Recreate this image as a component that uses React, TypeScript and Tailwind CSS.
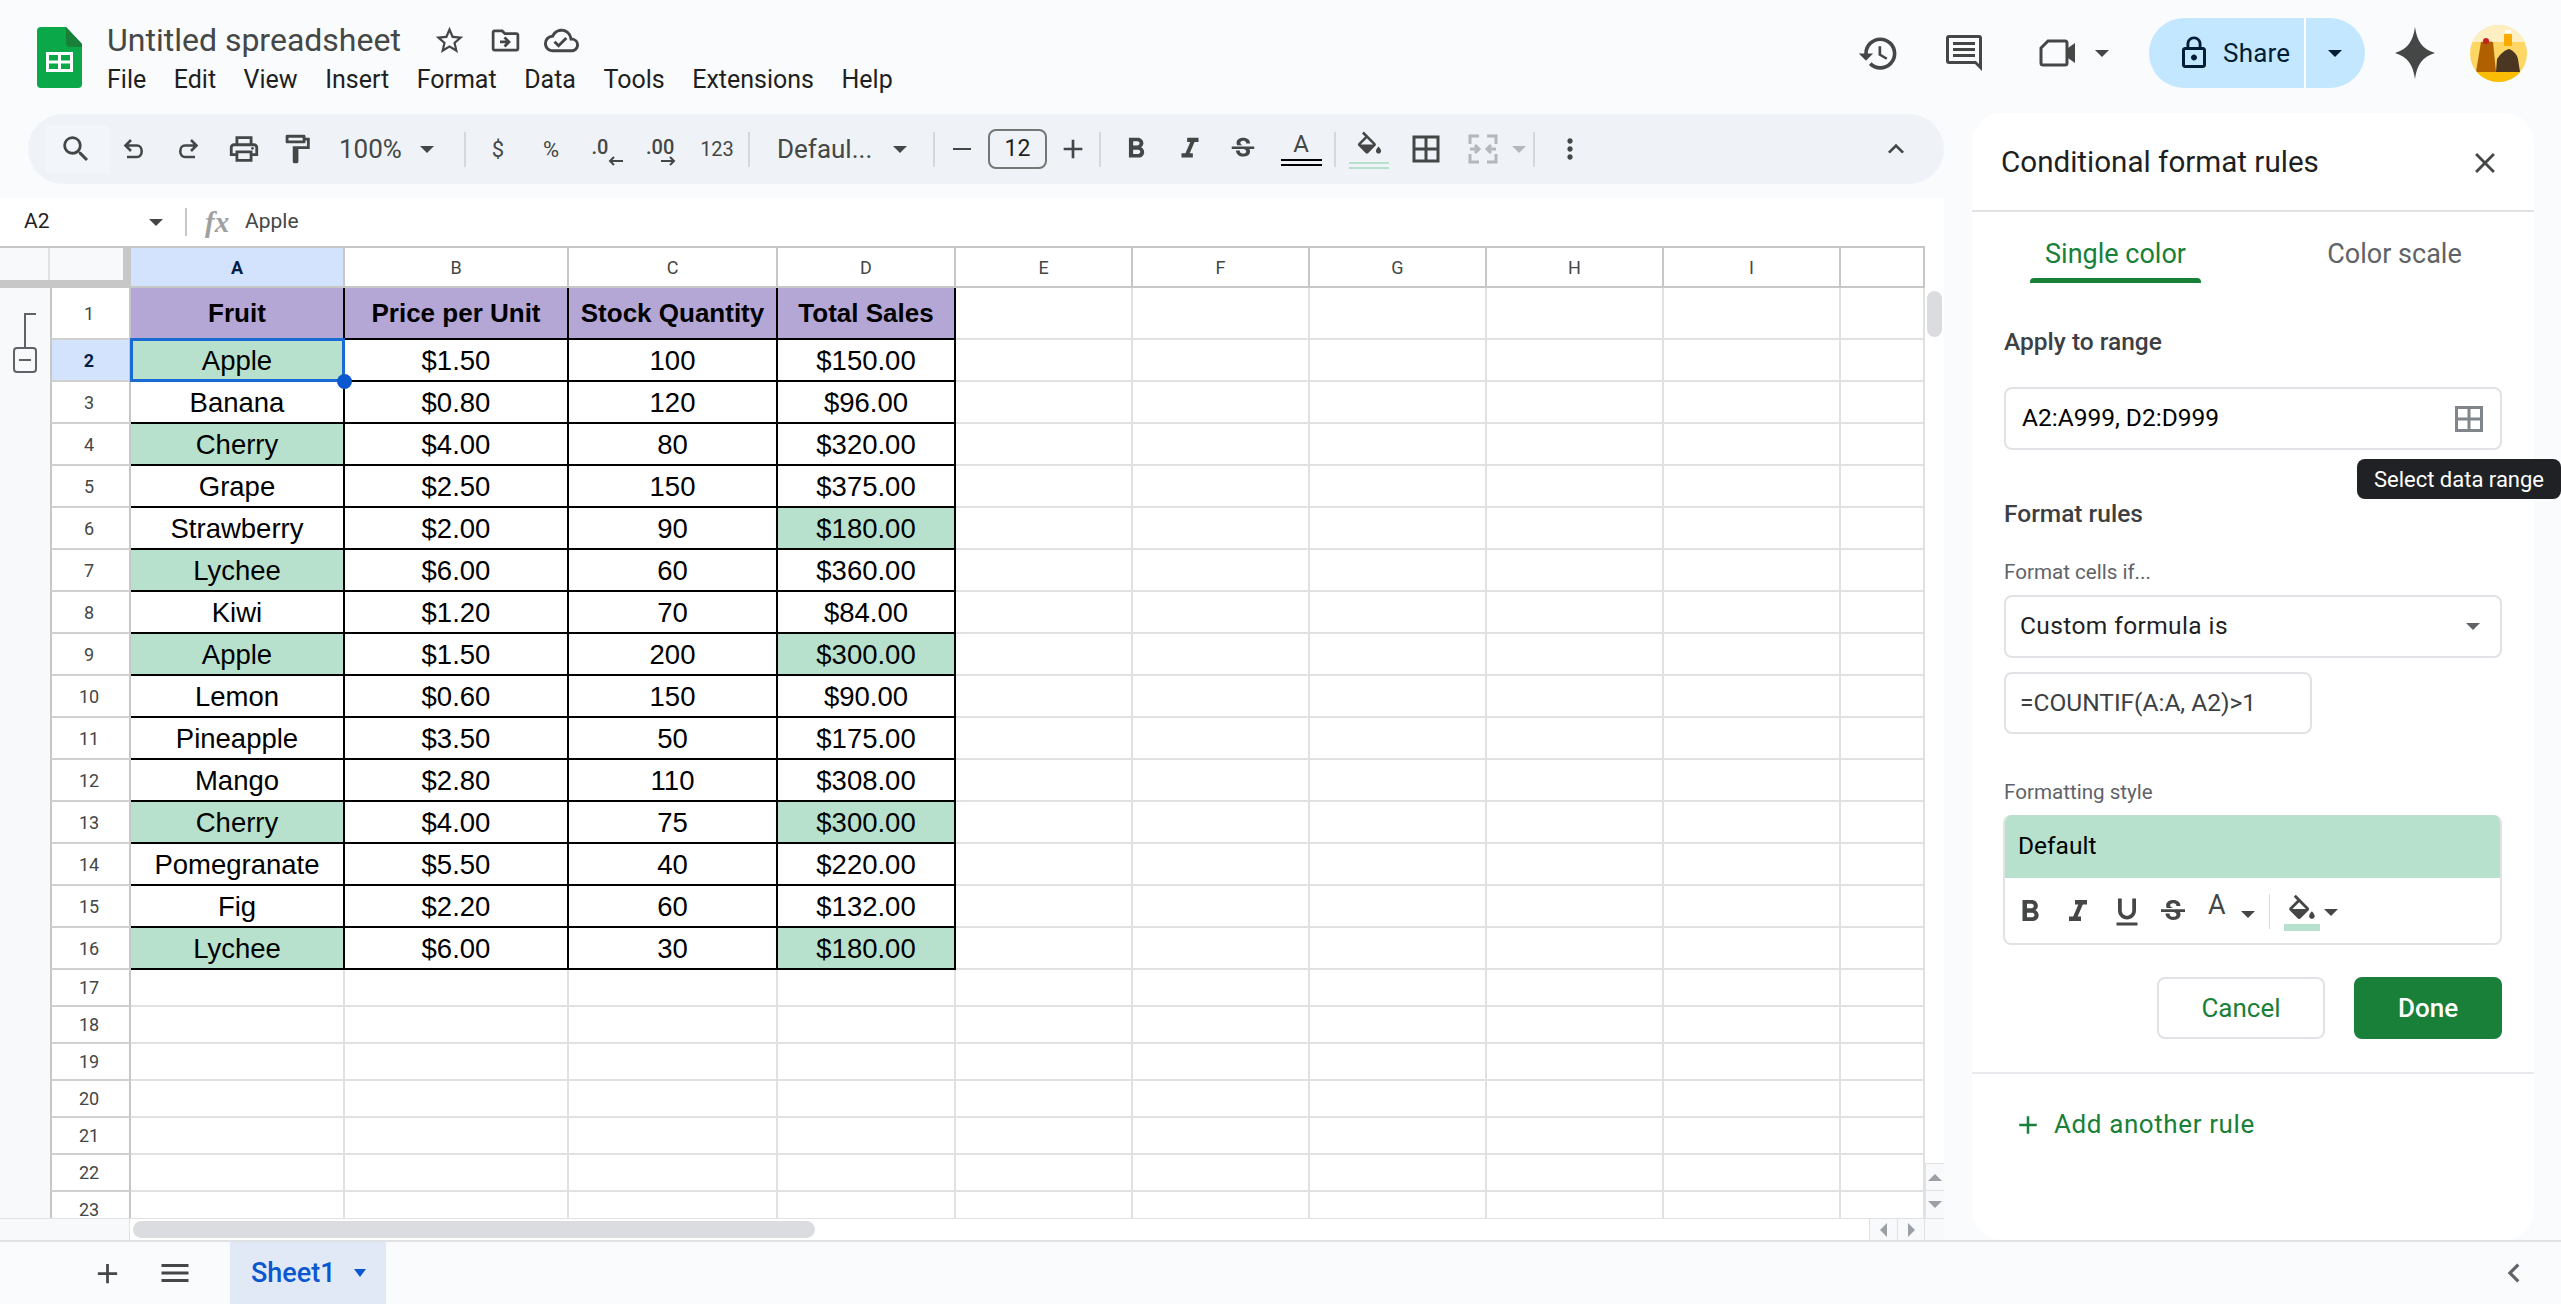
import type { ReactNode } from "react";
import {
  MdAdd,
  MdChevronLeft,
  MdClose,
  MdExpandLess,
  MdFormatBold,
  MdFormatItalic,
  MdFormatUnderlined,
  MdHistory,
  MdLockOutline,
  MdMenu,
  MdMoreVert,
  MdOutlineBorderAll,
  MdOutlineCloudDone,
  MdOutlineDriveFileMove,
  MdOutlineFormatPaint,
  MdOutlineLocalPrintshop,
  MdOutlineStarBorder,
  MdSearch,
  MdStrikethroughS,
} from "react-icons/md";

const menus = ["File", "Edit", "View", "Insert", "Format", "Data", "Tools", "Extensions", "Help"];

const rows: [string, string, string, string, boolean, boolean][] = [
  ["Apple", "$1.50", "100", "$150.00", true, false],
  ["Banana", "$0.80", "120", "$96.00", false, false],
  ["Cherry", "$4.00", "80", "$320.00", true, false],
  ["Grape", "$2.50", "150", "$375.00", false, false],
  ["Strawberry", "$2.00", "90", "$180.00", false, true],
  ["Lychee", "$6.00", "60", "$360.00", true, false],
  ["Kiwi", "$1.20", "70", "$84.00", false, false],
  ["Apple", "$1.50", "200", "$300.00", true, true],
  ["Lemon", "$0.60", "150", "$90.00", false, false],
  ["Pineapple", "$3.50", "50", "$175.00", false, false],
  ["Mango", "$2.80", "110", "$308.00", false, false],
  ["Cherry", "$4.00", "75", "$300.00", true, true],
  ["Pomegranate", "$5.50", "40", "$220.00", false, false],
  ["Fig", "$2.20", "60", "$132.00", false, false],
  ["Lychee", "$6.00", "30", "$180.00", true, true],
];

const colA = "w-[214px]";
const colB = "w-[224px]";
const colC = "w-[209px]";
const colD = "w-[178px]";
const colE = "w-[177px]";
const colLast = "w-[84px]";
const plainCols = [colE, colE, colE, colE, colE, colLast];
const allCols = [colA, colB, colC, colD, ...plainCols];
const letters = ["A", "B", "C", "D", "E", "F", "G", "H", "I", ""];

function Caret({ className = "" }: { className?: string }) {
  return <span className={`inline-block h-0 w-0 border-x-[7px] border-t-[7px] border-x-transparent ${className}`} />;
}

function Slot({ className = "", children }: { className?: string; children?: ReactNode }) {
  return <div className={`flex h-full shrink-0 items-center justify-center ${className}`}>{children}</div>;
}

function Divider() {
  return <div className="h-[35px] w-[2px] shrink-0 bg-[#d4d7db]" />;
}

function FillIcon({ size }: { size: number }) {
  return (
    <svg width={size} height={size} viewBox="0 0 24 20" fill="#444746">
      <path d="M16.56 8.94 7.62 0 6.21 1.41l2.38 2.38-5.15 5.15c-.59.59-.59 1.54 0 2.12l5.5 5.5c.29.29.68.44 1.06.44s.77-.15 1.06-.44l5.5-5.5c.59-.58.59-1.53 0-2.11zM5.21 10 10 5.21 14.79 10H5.21zM19 11.5s-2 2.17-2 3.5c0 1.1.9 2 2 2s2-.9 2-2c0-1.33-2-3.5-2-3.5z" />
    </svg>
  );
}

function HookArrow({ flip }: { flip?: boolean }) {
  return (
    <svg width="24" height="24" viewBox="0 0 24 24" fill="none" stroke="#444746" strokeWidth="2.600" className={flip ? "-scale-x-100" : ""}>
      <path d="M9 3 3.500 8.500 9 14M3.500 8.500H15a4.500 5.500 0 0 1 0 11.500H5" />
    </svg>
  );
}

function DecimalArrow({ left }: { left: boolean }) {
  return (
    <svg width="15" height="10" viewBox="0 0 15 10" fill="none" stroke="#444746" strokeWidth="2" className="self-end">
      {left ? <path d="M15 5H2M6 1 2 5l4 4" /> : <path d="M0 5h13M9 1l4 4-4 4" />}
    </svg>
  );
}

function Logo() {
  return (
    <svg width="45" height="61" viewBox="0 0 45 61" className="shrink-0">
      <path d="M4 0h25l16 17v40a4 4 0 0 1-4 4H4a4 4 0 0 1-4-4V4a4 4 0 0 1 4-4z" fill="#0ba84a" />
      <path d="M29 0l16 17v3H33a4 4 0 0 1-4-4z" fill="#188038" />
      <path d="M9 25h27v20H9z" fill="#fff" />
      <path d="M12 28h9v5.500h-9zM24 28h9v5.500h-9zM12 36.500h9V42h-9zM24 36.500h9V42h-9z" fill="#0ba84a" />
    </svg>
  );
}

function Avatar() {
  return (
    <svg width="57" height="57" viewBox="0 0 57 57" className="shrink-0">
      <defs>
        <clipPath id="avatar-clip">
          <circle cx="28.500" cy="28.500" r="28.500" />
        </clipPath>
      </defs>
      <g clipPath="url(#avatar-clip)">
        <rect width="57" height="57" fill="#fdd663" />
        <rect width="57" height="17" fill="#feefc3" />
        <rect y="47" width="57" height="10" fill="#fbbc04" />
        <path d="M11 17l6-1 6 1 3 30H6z" fill="#b06000" />
        <path d="M26 47l1-13c4-6 8-9 12-10 5 2 8 6 9 10l2 13z" fill="#4b3621" />
        <rect x="34" y="9" width="8" height="12" rx="1" fill="#f9ab00" />
        <rect x="35" y="5" width="6" height="3" fill="#fff" />
        <circle cx="16" cy="16" r="3" fill="#c5221f" />
      </g>
    </svg>
  );
}

function Header() {
  return (
    <header className="flex h-[113px] shrink-0 items-start">
      <div className="ml-[37px] mt-[27px]">
        <Logo />
      </div>
      <div className="ml-[25px] mt-[20px] flex flex-col">
        <div className="flex h-[40px] items-center text-[#444746]">
          <span className="w-[327px] text-[32px] leading-none text-[#444746]">Untitled spreadsheet</span>
          <MdOutlineStarBorder size={33} className="-ml-[1px]" />
          <MdOutlineDriveFileMove size={33} className="ml-[23px]" />
          <MdOutlineCloudDone size={35} className="ml-[22px]" />
        </div>
        <nav className="mt-[4px] flex h-[30px] items-center gap-[27.5px] text-[25px] leading-none text-[#1f1f1f]">
          {menus.map((m) => (
            <span key={m}>{m}</span>
          ))}
        </nav>
      </div>
      <div className="ml-auto mt-[18px] flex h-[70px] items-center pr-[34px] text-[#444746]">
        <MdHistory size={43} />
        <svg width="36" height="36" viewBox="0 0 36 36" fill="#444746" className="ml-[46px]">
          <path d="M3 0h30a3 3 0 0 1 3 3v33l-7-7H3a3 3 0 0 1-3-3V3a3 3 0 0 1 3-3zm0 3v23h27l3 3V3zm4 4h22v3H7zm0 6h22v3H7zm0 6h22v3H7z" fillRule="evenodd" />
        </svg>
        <svg width="37" height="28" viewBox="0 0 37 28" fill="none" stroke="#444746" strokeWidth="3" className="ml-[57px]">
          <path d="M9 2h17a2 2 0 0 1 2 2v20a2 2 0 0 1-2 2H4a2 2 0 0 1-2-2V9z" />
          <path d="M29 9l7-5v20l-7-5z" fill="#444746" stroke="none" />
        </svg>
        <Caret className="ml-[19px] border-t-[#444746]" />
        <div className="ml-[40px] flex h-[70px] w-[216px] items-center rounded-full bg-[#c2e7ff] text-[#001d35]">
          <div className="flex h-full w-[157px] items-center border-r-2 border-white pl-[27px]">
            <MdLockOutline size={36} />
            <span className="ml-[11px] text-[26px] tracking-[0.2px]">Share</span>
          </div>
          <Caret className="ml-[22px] border-t-[#001d35]" />
        </div>
        <svg width="40" height="52" viewBox="0 0 40 52" fill="#444746" className="ml-[30px]">
          <path d="M20 0c2 14 7 22 20 26-13 4-18 12-20 26-2-14-7-22-20-26 13-4 18-12 20-26z" />
        </svg>
        <div className="ml-[35px]">
          <Avatar />
        </div>
      </div>
    </header>
  );
}

function Toolbar() {
  return (
    <div className="ml-[28px] mt-px flex h-[70px] w-[1916px] items-center rounded-full bg-[#eff3f8] pl-[17px] text-[#444746]">
      <Slot className="my-[11px] !h-[48px] w-[65px] bg-[#f2f5fa] pr-[3px]">
        <MdSearch size={34} />
      </Slot>
      <Slot className="w-[48px]"><HookArrow /></Slot>
      <Slot className="w-[60px]"><HookArrow flip /></Slot>
      <Slot className="w-[52px]"><MdOutlineLocalPrintshop size={34} /></Slot>
      <Slot className="w-[54px]"><MdOutlineFormatPaint size={34} /></Slot>
      <Slot className="w-[140px] justify-start pl-[15px]">
        <span className="w-[81px] text-[26px]">100%</span>
        <Caret className="border-t-[#444746]" />
      </Slot>
      <Divider />
      <Slot className="w-[64px] text-[22px]">$</Slot>
      <Slot className="w-[42px] text-[22px]">%</Slot>
      <Slot className="w-[64px] pl-[6px]">
        <div className="flex w-[31px] flex-col pt-[5px]">
          <span className="text-[20px] font-medium leading-[18px]">.0</span>
          <DecimalArrow left />
        </div>
      </Slot>
      <Slot className="w-[50px]">
        <div className="flex w-[30px] flex-col pt-[5px]">
          <span className="text-[20px] font-medium leading-[18px]">.00</span>
          <DecimalArrow left={false} />
        </div>
      </Slot>
      <Slot className="w-[62px] text-[20px]">123</Slot>
      <Divider />
      <Slot className="w-[183px] justify-start pl-[27px]">
        <span className="w-[116px] text-[26px]">Defaul...</span>
        <Caret className="border-t-[#444746]" />
      </Slot>
      <Divider />
      <Slot className="w-[53px]"><div className="h-[2px] w-[18px] bg-[#444746]" /></Slot>
      <div className="flex h-[40px] w-[59px] shrink-0 items-center justify-center rounded-[8px] border-2 border-[#747775] text-[23px] text-[#1f1f1f]">12</div>
      <Slot className="w-[52px]"><MdAdd size={32} /></Slot>
      <Divider />
      <Slot className="w-[70px]"><MdFormatBold size={34} /></Slot>
      <Slot className="w-[38px]"><MdFormatItalic size={34} /></Slot>
      <Slot className="w-[68px]"><MdStrikethroughS size={30} /></Slot>
      <Slot className="w-[48px]">
        <div className="flex flex-col items-center">
          <span className="text-[24px] leading-[24px]">A</span>
          <div className="mt-[3px] h-[7px] w-[41px] border-y-2 border-black" />
        </div>
      </Slot>
      <div className="w-[9px] shrink-0" />
      <Divider />
      <Slot className="w-[66px]">
        <div className="flex flex-col items-center">
          <FillIcon size={31} />
          <div className="mt-[2px] h-[7px] w-[40px] border-y-2 border-[#b7e1cd]" />
        </div>
      </Slot>
      <Slot className="w-[48px]"><MdOutlineBorderAll size={36} /></Slot>
      <Slot className="w-[58px] pl-[8px]">
        <svg width="30" height="30" viewBox="0 0 30 30" fill="none" stroke="#b4b7bb" strokeWidth="3">
          <path d="M11 2H2v8M19 2h9v8M11 28H2v-8M19 28h9v-8M2 15h8M7 11l4 4-4 4M28 15h-8M23 11l-4 4 4 4" />
        </svg>
      </Slot>
      <Slot className="w-[22px]"><Caret className="border-t-[#b4b7bb]" /></Slot>
      <div className="w-[3px] shrink-0" />
      <Divider />
      <Slot className="w-[70px]"><MdMoreVert size={32} /></Slot>
      <Slot className="ml-auto mr-[28px] w-[40px]"><MdExpandLess size={32} /></Slot>
    </div>
  );
}

function FormulaBar() {
  return (
    <div className="mt-[14px] flex h-[48px] w-[1944px] items-center bg-white text-[21px]">
      <span className="ml-[24px] w-[125px] text-[#1f1f1f]">A2</span>
      <Caret className="border-t-[#444746]" />
      <div className="ml-[22px] h-[28px] w-[2px] bg-[#c7c7c7]" />
      <span className="ml-[18px] w-[40px] text-[29px] font-bold italic leading-none text-[#a0a0a0] [font-family:'Liberation_Serif',serif]">fx</span>
      <span className="text-[#444746]">Apple</span>
    </div>
  );
}

function ColumnHeaders() {
  return (
    <div className="flex h-[42px] shrink-0 border-t-2 border-[#c4c7c5]">
      <div className="flex w-[131px] shrink-0 border-b-[8px] border-r-[8px] border-[#c7c7c7] bg-[#f8f9fa]">
        <div className="w-[50px] border-r-2 border-[#e1e1e1]" />
      </div>
      {allCols.map((w, i) => (
        <div
          key={i}
          className={`flex ${w} shrink-0 items-center justify-center border-b-2 border-r-2 border-[#c7c7c7] text-[18px] ${
            i === 0 ? "bg-[#d3e3fd] font-bold text-[#041e49]" : "bg-white text-[#444746]"
          }`}
        >
          {letters[i]}
        </div>
      ))}
    </div>
  );
}

function RowLabel({ n, active, height }: { n: number; active?: boolean; height: string }) {
  return (
    <>
      <div className={`${height} w-[50px] shrink-0 bg-[#f8f9fa]`} />
      <div
        className={`flex ${height} w-[81px] shrink-0 items-center justify-center border-x-2 border-b-2 border-x-[#c7c7c7] border-b-[#d0d0d0] pr-[3px] text-[18px] ${
          active ? "bg-[#d3e3fd] font-bold text-[#041e49]" : "bg-white text-[#444746]"
        }`}
      >
        {n}
      </div>
    </>
  );
}

function Cell({ w, fill, active, children }: { w: string; fill?: boolean; active?: boolean; children: ReactNode }) {
  return (
    <div
      className={`relative flex h-full ${w} shrink-0 items-center justify-center border-b-[2px] border-r-[2px] border-black pt-[2px] text-[27.5px] leading-none text-black [font-family:'Liberation_Sans',Arial,sans-serif] ${
        fill ? "bg-[#b7e1cd]" : "bg-white"
      }`}
    >
      {children}
      {active && (
        <>
          <div className="absolute -bottom-[2px] -left-[1px] -right-[2px] -top-[2px] border-[3px] border-[#1a6ad4]" />
          <div className="absolute -bottom-[9px] -right-[9px] z-10 h-[15px] w-[15px] rounded-full bg-[#0b57d0]" />
        </>
      )}
    </div>
  );
}

function Sheet() {
  return (
    <div className="relative h-[972px] w-[1925px] shrink-0 overflow-hidden">
      <ColumnHeaders />
      <div className="flex h-[52px]">
        <RowLabel n={1} height="h-[52px]" />
        {["Fruit", "Price per Unit", "Stock Quantity", "Total Sales"].map((t, i) => (
          <div
            key={t}
            className={`flex h-full ${allCols[i]} shrink-0 items-center justify-center border-b-[2px] border-r-[2px] border-black bg-[#b4a7d6] text-[26px] font-bold leading-none text-black [font-family:'Liberation_Sans',Arial,sans-serif]`}
          >
            {t}
          </div>
        ))}
        <BlankCells />
      </div>
      {rows.map((r, i) => (
        <div key={i} className="flex h-[42px]">
          <RowLabel n={i + 2} active={i === 0} height="h-[42px]" />
          <Cell w={colA} fill={r[4]} active={i === 0}>{r[0]}</Cell>
          <Cell w={colB}>{r[1]}</Cell>
          <Cell w={colC}>{r[2]}</Cell>
          <Cell w={colD} fill={r[5]}>{r[3]}</Cell>
          <BlankCells />
        </div>
      ))}
      {[17, 18, 19, 20, 21, 22].map((n) => (
        <div key={n} className="flex h-[37px]">
          <RowLabel n={n} height="h-[37px]" />
          {allCols.map((w, i) => (
            <div key={i} className={`h-full ${w} shrink-0 border-b-2 border-r-2 border-[#e1e1e1] bg-white`} />
          ))}
        </div>
      ))}
      {/* row 23 only shows its upper part above the scrollbar */}
      <div className="flex h-[26px]">
        <div className="h-full w-[50px] shrink-0 bg-[#f8f9fa]" />
        <div className="flex h-full w-[81px] shrink-0 justify-center border-x-2 border-x-[#c7c7c7] bg-white pr-[3px] pt-[11px] text-[18px] leading-[14px] text-[#444746]">
          23
        </div>
        {allCols.map((w, i) => (
          <div key={i} className={`h-full ${w} shrink-0 border-r-2 border-[#e1e1e1] bg-white`} />
        ))}
      </div>
      <svg width="26" height="62" viewBox="0 0 26 62" fill="none" stroke="#5f6368" strokeWidth="2" className="absolute left-[12px] top-[66px]">
        <path d="M24 2h-11v34" />
        <rect x="2" y="36" width="22" height="24" rx="3" />
        <path d="M7 48h12" />
      </svg>
    </div>
  );
}

function BlankCells() {
  return (
    <>
      {plainCols.map((w, i) => (
        <div key={i} className={`h-full ${w} shrink-0 border-b-2 border-r-2 border-[#e1e1e1] bg-white`} />
      ))}
    </>
  );
}

function VerticalScroll() {
  return (
    <div className="flex w-[19px] shrink-0 flex-col bg-white">
      <div className="ml-[2px] mt-[45px] h-[46px] w-[15px] rounded-full bg-[#dadce0]" />
      <div className="mt-auto flex h-[28px] items-center justify-center border-y border-l border-[#e1e1e1] bg-[#f8f9fa]">
        <span className="h-0 w-0 border-x-[7px] border-b-[7px] border-x-transparent border-b-[#9aa0a6]" />
      </div>
      <div className="flex h-[27px] items-center justify-center border-l border-[#e1e1e1] bg-[#f8f9fa]">
        <span className="h-0 w-0 border-x-[7px] border-t-[7px] border-x-transparent border-t-[#9aa0a6]" />
      </div>
    </div>
  );
}

function HorizontalScroll() {
  return (
    <div className="flex h-[22px] shrink-0 border-t border-[#e1e1e1] bg-white">
      <div className="h-full w-[130px] shrink-0 border-r border-[#e1e1e1] bg-[#f8f9fa]" />
      <div className="ml-[3px] mt-[2px] h-[17px] w-[682px] rounded-full bg-[#dadce0]" />
      <div className="ml-auto flex h-full w-[28px] items-center justify-center border-l border-[#e1e1e1] bg-[#f8f9fa]">
        <span className="h-0 w-0 border-y-[7px] border-r-[7px] border-y-transparent border-r-[#9aa0a6]" />
      </div>
      <div className="flex h-full w-[27px] items-center justify-center border-l border-[#e1e1e1] bg-[#f8f9fa]">
        <span className="h-0 w-0 border-y-[7px] border-l-[7px] border-y-transparent border-l-[#9aa0a6]" />
      </div>
      <div className="h-full w-[20px] border-l border-[#e1e1e1] bg-[#f8f9fa]" />
    </div>
  );
}

function FieldBox({ className = "", children }: { className?: string; children: ReactNode }) {
  return (
    <div className={`flex h-[62px] items-center rounded-[8px] border-2 border-[#e0e2e6] bg-white text-[24.5px] ${className}`}>
      {children}
    </div>
  );
}

function Panel() {
  return (
    <aside className="relative ml-[28px] flex h-[1127px] w-[562px] shrink-0 flex-col rounded-[30px] bg-white">
      <div className="flex h-[99px] shrink-0 items-center justify-between border-b-2 border-[#e0e2e6] pl-[29px] pr-[32px] pt-[2px]">
        <span className="text-[29.6px] text-[#1f1f1f]">Conditional format rules</span>
        <MdClose size={34} className="text-[#444746]" />
      </div>
      <div className="flex h-[71px] shrink-0 pl-[58px] text-[27px]">
        <div className="flex w-[171px] flex-col items-center">
          <div className="flex flex-1 items-center pt-[19px] text-[#188038]">Single color</div>
          <div className="h-[5px] w-full rounded-t-[4px] bg-[#188038]" />
        </div>
        <div className="ml-[108px] flex w-[171px] flex-col items-center">
          <div className="flex flex-1 items-center pb-[5px] pt-[19px] text-[#5f6368]">Color scale</div>
        </div>
      </div>
      <div className="flex flex-col pl-[32px] pr-[32px]">
        <div className="mt-[45px] h-[28px] text-[24.5px] font-medium leading-[28px] text-[#3c4043]">Apply to range</div>
        <FieldBox className="mt-[31px] !h-[63px] justify-between pl-[16px] pr-[17px] text-black">
          <span>A2:A999, D2:D999</span>
          <svg width="28" height="26" viewBox="0 0 28 26" fill="none" stroke="#80868b" strokeWidth="3">
            <rect x="1.500" y="1.500" width="25" height="23" />
            <path d="M14 1.500v23M1.500 13h25" />
          </svg>
        </FieldBox>
        <div className="mt-[50px] h-[28px] text-[24.5px] font-medium leading-[28px] text-[#3c4043]">Format rules</div>
        <div className="mt-[32px] h-[24px] text-[20.6px] leading-[24px] text-[#5f6368]">Format cells if...</div>
        <FieldBox className="mt-[11px] !h-[63px] justify-between pl-[14px] pr-[20px] text-[#1f1f1f]">
          <span className="tracking-[0.4px]">Custom formula is</span>
          <Caret className="border-t-[#5f6368]" />
        </FieldBox>
        <FieldBox className="mt-[14px] w-[308px] pl-[14px] text-[#3c4043]">=COUNTIF(A:A, A2)&gt;1</FieldBox>
        <div className="mt-[46px] h-[24px] text-[20.6px] leading-[24px] text-[#5f6368]">Formatting style</div>
        <div className="-ml-[1px] mt-[11px] overflow-hidden rounded-[8px] border-2 border-t-0 border-[#e0e2e6]">
          <div className="-mx-[2px] flex h-[63px] items-center bg-[#b7e1cd] pl-[15px] text-[24.5px] text-black">Default</div>
          <div className="flex h-[65px] items-center pt-[2px] text-[#444746]">
            <MdFormatBold size={36} className="ml-[7px]" />
            <MdFormatItalic size={36} className="ml-[12px]" />
            <MdFormatUnderlined size={36} className="ml-[13px]" />
            <MdStrikethroughS size={32} className="ml-[12px]" />
            <div className="ml-[19px] flex w-[60px] items-start">
              <span className="-mt-[13px] text-[27px] leading-[30px]">A</span>
              <Caret className="ml-[15px] mt-[8px] border-t-[#444746]" />
            </div>
            <div className="ml-[1px] h-[35px] w-px bg-[#dadce0]" />
            <div className="ml-[14px] flex w-[36px] flex-col items-center">
              <FillIcon size={34} />
              <div className="-mt-[2px] h-[7px] w-[36px] bg-[#b7e1cd]" />
            </div>
            <Caret className="ml-[4px] mt-[2px] border-t-[#444746]" />
          </div>
        </div>
        <div className="mt-[32px] flex justify-end gap-[29px] text-[26px]">
          <div className="flex h-[62px] w-[168px] items-center justify-center rounded-[8px] border-2 border-[#e0e2e6] text-[#188038]">Cancel</div>
          <div className="flex h-[62px] w-[148px] items-center justify-center rounded-[8px] bg-[#188038] font-medium text-white">Done</div>
        </div>
      </div>
      <div className="mt-[33px] h-[2px] shrink-0 bg-[#e8eaed]" />
      <div className="mt-[31px] flex items-center pl-[41px] text-[26px] tracking-[0.6px] text-[#188038]">
        <MdAdd size={30} />
        <span className="ml-[11px]">Add another rule</span>
      </div>
      <div className="absolute left-[385px] top-[346px] flex h-[40px] w-[204px] items-center justify-center rounded-[8px] bg-[#202124] text-[22px] text-white">
        Select data range
      </div>
    </aside>
  );
}

function Footer() {
  return (
    <footer className="flex h-[64px] shrink-0 items-center border-t-2 border-[#e0e2e6] text-[#444746]">
      <MdAdd size={33} className="ml-[91px]" />
      <MdMenu size={36} className="ml-[33px]" />
      <div className="ml-[37px] flex h-full w-[156px] items-center bg-[#e1e9f7] pl-[21px] text-[27px] font-medium text-[#0b57d0]">
        Sheet1
        <Caret className="ml-[18px] !border-x-[6px] !border-t-[8px] border-t-[#0b57d0]" />
      </div>
      <MdChevronLeft size={38} className="ml-auto mr-[28px] text-[#5f6368]" />
    </footer>
  );
}

export default function App() {
  return (
    <div className="flex h-[1306px] w-[2561px] flex-col overflow-hidden bg-white [font-family:Roboto,sans-serif]">
      <div className="flex h-[1304px] flex-col bg-[#f9fbfd]">
        <Header />
        <main className="flex h-[1127px] shrink-0">
          <div className="flex w-[1944px] shrink-0 flex-col">
            <Toolbar />
            <FormulaBar />
            <div className="flex">
              <Sheet />
              <VerticalScroll />
            </div>
            <HorizontalScroll />
          </div>
          <Panel />
        </main>
        <Footer />
      </div>
    </div>
  );
}
